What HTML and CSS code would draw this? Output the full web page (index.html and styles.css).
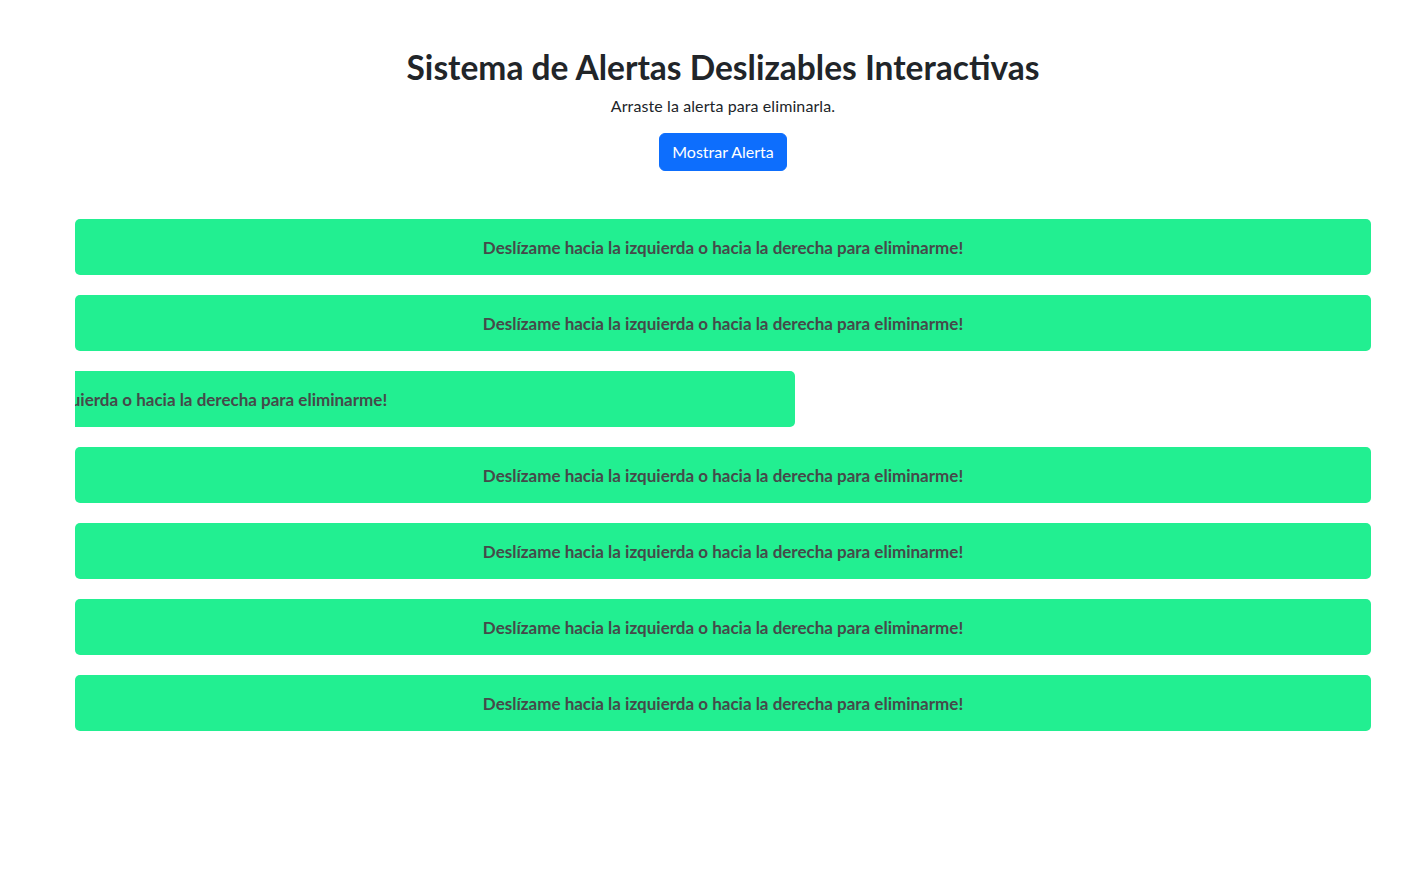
FILE: index.html
```html
<!DOCTYPE html>
<html lang="es">
<head>
<meta charset="utf-8">
<title>Sistema de Alertas Deslizables Interactivas</title>
<link rel="stylesheet" href="styles.css">
</head>
<body>
<main class="container">
  <header class="intro">
    <h1 class="title">Sistema de Alertas Deslizables Interactivas</h1>
    <p class="subtitle">Arraste la alerta para eliminarla.</p>
    <button class="btn-primary" type="button">Mostrar Alerta</button>
  </header>
  <section class="alerts">
    <div class="alert">Deslízame hacia la izquierda o hacia la derecha para eliminarme!</div>
    <div class="alert">Deslízame hacia la izquierda o hacia la derecha para eliminarme!</div>
    <div class="alert alert-dragging">Deslízame hacia la izquierda o hacia la derecha para eliminarme!</div>
    <div class="alert">Deslízame hacia la izquierda o hacia la derecha para eliminarme!</div>
    <div class="alert">Deslízame hacia la izquierda o hacia la derecha para eliminarme!</div>
    <div class="alert">Deslízame hacia la izquierda o hacia la derecha para eliminarme!</div>
    <div class="alert">Deslízame hacia la izquierda o hacia la derecha para eliminarme!</div>
  </section>
</main>
</body>
</html>
```

FILE: styles.css
```css
* { box-sizing: border-box; }

html, body {
  margin: 0;
  background: #ffffff;
}

body {
  padding-left: 28px;
  font-family: Lato, "Liberation Sans", sans-serif;
  font-size: 16px;
  line-height: 1.5;
  color: #212529;
}

.container {
  width: 1296px;
  margin: 0 auto;
  padding-top: 48px;
}

.intro {
  display: flex;
  flex-direction: column;
  align-items: center;
  text-align: center;
}

.title {
  margin: 0 0 8px;
  font-size: 33.5px;
  font-weight: 700;
  line-height: 38px;
  color: #212529;
}

.subtitle {
  margin: 0 0 15px;
  font-size: 16px;
  letter-spacing: 0.1px;
}

.btn-primary {
  font-family: inherit;
  font-size: 16px;
  line-height: 24px;
  padding: 6px 12px;
  color: #ffffff;
  background: #0d6efd;
  border: 1px solid #0d6efd;
  border-radius: 6px;
}

.alerts {
  display: flex;
  flex-direction: column;
  gap: 20px;
  margin-top: 48px;
  overflow: hidden;
}

.alert {
  height: 56px;
  padding: 16px;
  background: #22ef91;
  border-radius: 5px;
  text-align: center;
  font-weight: 700;
  font-size: 17px;
  line-height: 26px;
  color: #454a4a;
  white-space: nowrap;
}

.alert-dragging {
  transform: translateX(-576px);
}
```
